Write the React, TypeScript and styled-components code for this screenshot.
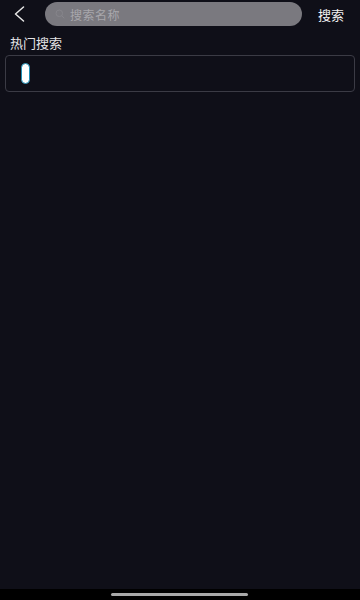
import styled, { createGlobalStyle } from "styled-components";

const GlobalStyle = createGlobalStyle`
  html, body {
    margin: 0;
    padding: 0;
    background: #0f0f18;
  }
  body {
    font-family: "Noto Sans CJK SC", "Noto Sans", sans-serif;
  }
`;

const Page = styled.div`
  width: 360px;
  height: 600px;
  display: flex;
  flex-direction: column;
  background: #0f0f18;
  overflow: hidden;
`;

const Main = styled.div`
  flex: 1;
  display: flex;
  flex-direction: column;
`;

const TopBar = styled.div`
  height: 28px;
  display: flex;
  align-items: center;
`;

const BackButton = styled.button`
  width: 45px;
  height: 28px;
  padding: 0 0 0 13px;
  border: none;
  background: transparent;
  display: flex;
  align-items: center;
  cursor: pointer;
`;

const SearchPill = styled.div`
  width: 257px;
  height: 24px;
  border-radius: 12px;
  background: #7a797f;
  display: flex;
  align-items: center;
  padding-left: 10px;
  box-sizing: border-box;
  gap: 5px;
`;

const SearchInput = styled.input`
  flex: 1;
  border: none;
  outline: none;
  background: transparent;
  font-family: "Noto Sans CJK SC", sans-serif;
  font-size: 12px;
  color: #e0e0e0;
  padding: 0;
  letter-spacing: 0.5px;

  &::placeholder {
    color: #a8a7ac;
  }
`;

const SearchText = styled.button`
  flex: 1;
  border: none;
  background: transparent;
  color: #f2f2f2;
  font-family: "Noto Sans CJK SC", sans-serif;
  font-size: 13px;
  padding: 0;
  text-align: center;
  cursor: pointer;
`;

const SectionTitle = styled.div`
  margin: 5px 0 0 10px;
  height: 20px;
  line-height: 20px;
  font-size: 13px;
  color: #e4e4e6;
`;

const HotBox = styled.div`
  margin: 2px 5px 0 5px;
  height: 37px;
  border: 1px solid #3b3b45;
  border-radius: 4px;
  display: flex;
  align-items: center;
  padding-left: 15px;
  box-sizing: border-box;
`;

const Tag = styled.div`
  width: 9px;
  height: 21px;
  box-sizing: border-box;
  border-radius: 5px;
  background: #ffffff;
  border: 1px solid #1f8fb5;
`;

const NavBar = styled.div`
  height: 11px;
  background: #000;
  display: flex;
  justify-content: center;
  align-items: center;
`;

const HomeIndicator = styled.div`
  width: 137px;
  height: 3px;
  border-radius: 2px;
  background: #a9a9a9;
  margin-left: -2px;
`;

export default function App() {
  return (
    <>
      <GlobalStyle />
      <Page>
        <Main>
          <TopBar>
            <BackButton aria-label="back">
              <svg width="13" height="16" viewBox="0 0 13 16" fill="none">
                <path
                  d="M10.5 1 L2.5 8 L10.5 15"
                  stroke="#e8e8e8"
                  strokeWidth="1.5"
                  strokeLinecap="round"
                  strokeLinejoin="round"
                />
              </svg>
            </BackButton>
            <SearchPill>
              <svg width="10" height="10" viewBox="0 0 10 10" fill="none">
                <circle cx="4.3" cy="4.3" r="3.3" stroke="#86858b" strokeWidth="1" />
                <path d="M6.8 6.8 L9 9" stroke="#86858b" strokeWidth="1" strokeLinecap="round" />
              </svg>
              <SearchInput placeholder="搜索名称" />
            </SearchPill>
            <SearchText>搜索</SearchText>
          </TopBar>
          <SectionTitle>热门搜索</SectionTitle>
          <HotBox>
            <Tag />
          </HotBox>
        </Main>
        <NavBar>
          <HomeIndicator />
        </NavBar>
      </Page>
    </>
  );
}
